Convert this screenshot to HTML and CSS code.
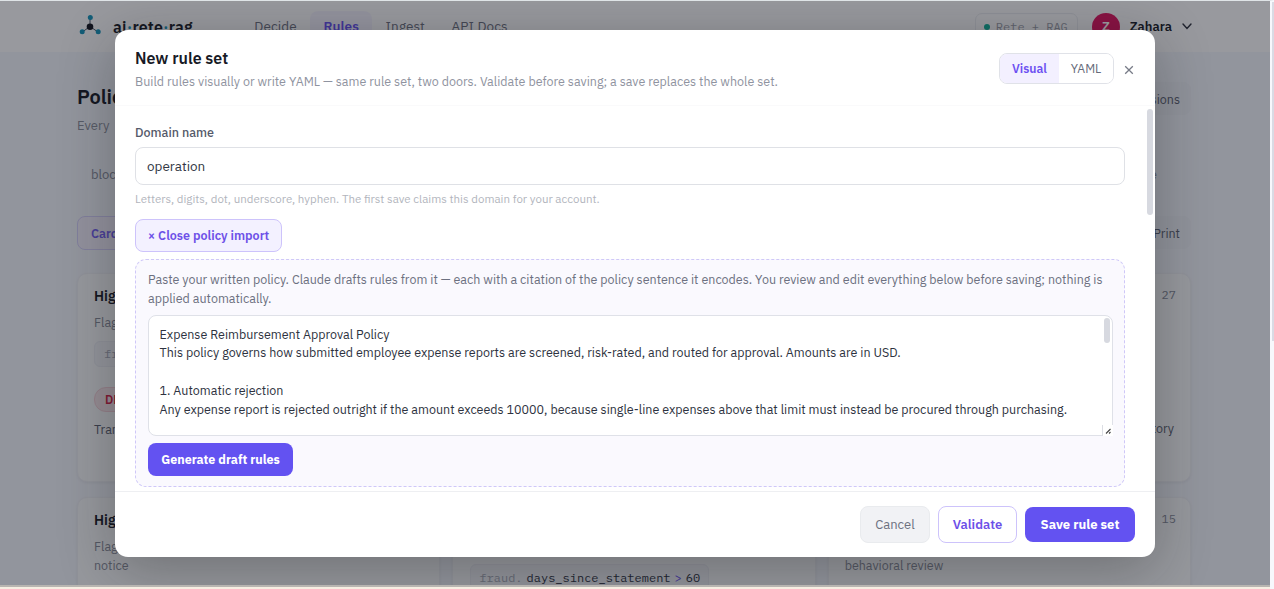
FILE: index.html
```html
<!DOCTYPE html>
<html lang="en">
<head>
    <meta charset="UTF-8">
    <meta name="viewport" content="width=device-width, initial-scale=1.0">
    <title>ai·rete·rag - Rules</title>
    <link rel="stylesheet" href="styles.css">
</head>
<body>
    <div class="app">
        <header class="topbar">
            <div class="brand">
                <svg class="logo" width="22" height="22" viewBox="0 0 22 22">
                    <path d="M11 12.5V4M11 12.5L3.3 18M11 12.5L19 18" stroke="#475569" stroke-width="1" fill="none"/>
                    <circle cx="11" cy="12.7" r="3.3" fill="#14161f"/>
                    <circle cx="11.3" cy="3.5" r="2.5" fill="#1593b8"/>
                    <circle cx="3.2" cy="17.8" r="2.5" fill="#1593b8"/>
                    <circle cx="19.2" cy="17.8" r="2.5" fill="#1593b8"/>
                </svg>
                <span class="brand-name">ai<i>·</i>rete<i>·</i>rag</span>
            </div>
            <nav class="nav">
                <a>Decide</a>
                <a class="active">Rules</a>
                <a>Ingest</a>
                <a>API Docs</a>
            </nav>
            <div class="account">
                <span class="mode"><span class="dot"></span>Rete + RAG</span>
                <span class="avatar">Z</span>
                <span class="user">Zahara</span>
                <svg width="10" height="7" viewBox="0 0 10 7"><path d="M1 1l4 4.5L9 1" fill="none" stroke="#2b2f3c" stroke-width="1.4" stroke-linecap="round"/></svg>
            </div>
        </header>

        <main class="page">
            <div class="page-head">
                <div>
                    <h1>Polici</h1>
                    <p class="lead">Every</p>
                </div>
                <button class="ghost">Versions</button>
            </div>
            <div class="notice-row"><span>block</span><span>e</span></div>
            <div class="toolbar">
                <button class="tab">Cards</button>
                <button class="ghost">Print</button>
            </div>
            <div class="cards">
                <article class="card">
                    <div class="card-title"><h3>High</h3></div>
                    <p>Flag</p>
                    <code class="cond"><span>fraud.</span></code>
                    <span class="deny">DENY</span>
                    <p class="reason">Trans</p>
                </article>
                <article class="card"></article>
                <article class="card">
                    <div class="card-title"><h3></h3><small>27</small></div>
                    <p class="reason tail">history</p>
                </article>
                <article class="card">
                    <div class="card-title"><h3>High</h3></div>
                    <p>Flag<br>notice</p>
                </article>
                <article class="card">
                    <code class="cond low"><span>fraud.</span>days_since_statement<b>&gt;</b>60</code>
                </article>
                <article class="card">
                    <div class="card-title"><h3></h3><small>15</small></div>
                    <p><br>behavioral review</p>
                </article>
            </div>
        </main>

        <div class="overlay">
            <div class="modal">
                <div class="modal-header">
                    <div>
                        <h2>New rule set</h2>
                        <p class="subtitle">Build rules visually or write YAML — same rule set, two doors. Validate before saving; a save replaces the whole set.</p>
                    </div>
                    <div class="header-actions">
                        <div class="switch">
                            <button class="on">Visual</button>
                            <button>YAML</button>
                        </div>
                        <svg width="10" height="10" viewBox="0 0 10 10"><path d="M1.2 1.2l7.6 7.6M8.8 1.2L1.2 8.8" stroke="#777b87" stroke-width="1.3"/></svg>
                    </div>
                </div>

                <div class="modal-body">
                    <label for="domain">Domain name</label>
                    <input id="domain" type="text" value="operation">
                    <p class="hint">Letters, digits, dot, underscore, hyphen. The first save claims this domain for your account.</p>
                    <button class="close-import">× Close policy import</button>
                    <div class="import">
                        <p class="import-text">Paste your written policy. Claude drafts rules from it — each with a citation of the policy sentence it encodes. You review and edit everything below before saving; nothing is<br>applied automatically.</p>
                        <div class="policy">
                            <textarea spellcheck="false">Expense Reimbursement Approval Policy
This policy governs how submitted employee expense reports are screened, risk-rated, and routed for approval. Amounts are in USD.

1. Automatic rejection
Any expense report is rejected outright if the amount exceeds 10000, because single-line expenses above that limit must instead be procured through purchasing.</textarea>
                            <span class="thumb"></span>
                            <svg class="grip" width="11" height="11" viewBox="0 0 11 11"><path d="M0 0h11v11H0z" fill="#fff"/><path d="M.5 0v11" stroke="#dcdee4"/><path d="M4 8.5L8.5 4M7 8.5l1.5-1.5" stroke="#444" stroke-width="1.1"/></svg>
                        </div>
                        <button class="primary small">Generate draft rules</button>
                    </div>
                    <span class="thumb body-thumb"></span>
                </div>

                <div class="modal-footer">
                    <button class="cancel">Cancel</button>
                    <button class="validate">Validate</button>
                    <button class="primary save">Save rule set</button>
                </div>
            </div>
        </div>
    </div>
    <span class="page-thumb"></span>
</body>
</html>
```

FILE: styles.css
```css
* {
    box-sizing: border-box;
}

body {
    margin: 0;
    height: 589px;
    overflow: hidden;
    background: #f7efe3;
    border-top: 1px solid #dfe4e7;
    border-right: 4px solid #f7f8fc;
    font-family: "IBM Plex Sans", Roboto, sans-serif;
    font-size: 13px;
    color: #171a26;
}

button, input, textarea {
    font-family: inherit;
    margin: 0;
}

h1, h2, h3, p {
    margin: 0;
}

.app {
    position: relative;
    height: 586px;
    overflow: hidden;
    background: #f0f3fa;
    border-bottom: 2px solid #b8b5b1;
}

/* top bar */
.topbar {
    display: flex;
    align-items: center;
    height: 51px;
    padding: 0 78px 0 79px;
    background: #fafafc;
}

.brand {
    display: flex;
    align-items: center;
    gap: 12px;
    width: 162px;
}

.logo {
    margin-top: -4px;
}

.brand-name {
    font-size: 16px;
    font-weight: 600;
    letter-spacing: 0.15px;
}

.brand-name i {
    color: #1593b8;
    font-style: normal;
}

.nav {
    display: flex;
    margin-top: -2px;
}

.nav a {
    padding: 6px 13.3px;
    border-radius: 8px;
    font-size: 13.5px;
    letter-spacing: 0.1px;
    color: #6a6f7e;
}

.nav .active {
    color: #644ff0;
    background: #f2f0fc;
    font-weight: 600;
}

.account {
    display: flex;
    align-items: center;
    margin-left: auto;
}

.mode {
    display: flex;
    align-items: center;
    gap: 6px;
    height: 28px;
    padding: 0 9px 0 8px;
    margin-right: 14px;
    border: 1px solid #e8eaef;
    border-radius: 7px;
    font-family: "IBM Plex Mono", "Liberation Mono", monospace;
    font-size: 12px;
    color: #9a9eaa;
}

.dot {
    width: 6px;
    height: 6px;
    border-radius: 50%;
    background: #10b09a;
}

.avatar {
    display: flex;
    align-items: center;
    justify-content: center;
    width: 28px;
    height: 28px;
    margin-right: 10px;
    border-radius: 50%;
    background: #df1460;
    color: #fff;
    font-weight: 600;
}

.user {
    margin-right: 10px;
    font-weight: 600;
}

/* rules page */
.page {
    padding: 30px 79px 0 77px;
}

.page-head, .toolbar, .notice-row {
    display: flex;
    justify-content: space-between;
}

.page-head {
    height: 70px;
}

h1 {
    font-size: 20px;
    font-weight: 600;
    line-height: 30px;
}

.lead {
    margin-top: 4px;
    line-height: 20px;
    color: #8b8f9c;
}

.ghost {
    height: 33px;
    padding: 0 10px;
    border: 1px solid #edf0f6;
    border-radius: 8px;
    background: #edf0f7;
    font-size: 12.5px;
    color: #5a5f70;
}

.notice-row {
    height: 64px;
    padding: 14px 34px 0 14px;
    color: #858a98;
}

.toolbar {
    height: 57px;
}

.tab {
    height: 34px;
    padding: 0 13px;
    border: 1px solid #d3cdf8;
    border-radius: 8px;
    background: #efedfa;
    font-size: 12.5px;
    font-weight: 600;
    color: #7360f0;
}

.cards {
    display: grid;
    grid-template-columns: repeat(3, 1fr);
    gap: 15px 12px;
}

.card {
    height: 209px;
    padding: 11px 14px 12px 16px;
    border: 1px solid #eceef3;
    border-radius: 10px;
    background: #f7f8fa;
    box-shadow: 0 1px 3px rgba(20, 24, 40, 0.06);
    font-size: 12.5px;
    line-height: 19px;
    color: #858a98;
}

.card-title {
    display: flex;
    justify-content: space-between;
    height: 28px;
}

.card h3 {
    font-size: 14px;
    font-weight: 600;
    line-height: 22px;
    color: #171a26;
}

.card small {
    font-size: 12px;
}

.cond {
    display: flex;
    gap: 5px;
    width: fit-content;
    height: 26px;
    margin-top: 9px;
    padding: 2px 9px;
    border: 1px solid #e8eaf1;
    border-radius: 6px;
    background: #eff1f6;
    font-family: "IBM Plex Mono", "Liberation Mono", monospace;
    font-size: 12px;
    color: #2c3142;
}

.cond span {
    color: #a5a9b6;
}

.cond b {
    font-weight: 400;
    color: #6650ee;
}

.low {
    gap: 4px;
    margin: 55px 0 0 1px;
    padding: 3px 8px;
}

.deny {
    display: inline-block;
    margin-top: 20px;
    padding: 2px 10px;
    border: 1px solid #f1cdd6;
    border-radius: 12px;
    background: #f5e4e8;
    font-size: 12px;
    font-weight: 600;
    color: #d02045;
}

.reason {
    margin-top: 8px;
    color: #5a5f70;
}

.tail {
    margin-top: 106px;
    text-align: right;
    padding-right: 2px;
}

/* modal */
.overlay {
    position: absolute;
    inset: 0;
    display: flex;
    justify-content: center;
    align-items: flex-start;
    padding-top: 29px;
    background: rgba(17, 20, 28, 0.42);
}

.modal {
    display: flex;
    flex-direction: column;
    width: 1040px;
    height: 527px;
    border-radius: 13px;
    background: #fff;
    box-shadow: 0 12px 56px rgba(20, 20, 20, 0.3);
}

.modal-header {
    display: flex;
    justify-content: space-between;
    height: 76px;
    padding: 17px 21px 0 20px;
    border-bottom: 1px solid #fafafb;
}

h2 {
    font-size: 16px;
    font-weight: 600;
    line-height: 22px;
}

.subtitle {
    margin-top: 2px;
    font-size: 12.5px;
    line-height: 20px;
    color: #8f93a0;
}

.header-actions {
    display: flex;
    align-items: center;
    gap: 10px;
    height: 31px;
    margin-top: 6px;
}

.header-actions > svg {
    margin-top: 2px;
}

.switch {
    display: flex;
    width: 115px;
    height: 31px;
    border: 1px solid #e0e2e8;
    border-radius: 8px;
    overflow: hidden;
}

.switch button {
    flex: 1;
    padding: 0 0 1px;
    border: 0;
    background: #fff;
    font-size: 12.25px;
    color: #666b7a;
}

.switch .on {
    flex: 0 0 59px;
    background: #f3f0ff;
    color: #6d50f2;
    font-weight: 600;
}

.modal-body {
    position: relative;
    height: 385px;
    padding: 16px 30px 0 20px;
}

.modal-body label {
    display: block;
    line-height: 20px;
    margin-bottom: 5px;
    font-size: 12.5px;
    font-weight: 500;
    color: #555a6a;
}

.modal-body input {
    display: block;
    width: 100%;
    height: 38px;
    padding: 0 11px;
    border: 1px solid #dfe1e6;
    border-radius: 8px;
    font-size: 13.5px;
    color: #333744;
}

.hint {
    margin-top: 5px;
    line-height: 18px;
    font-size: 11.5px;
    color: #b2b5bd;
}

.close-import {
    display: block;
    width: 147px;
    height: 33px;
    margin: 11px 0 7px;
    padding: 0 0 2px;
    border: 1px solid #cdc3fb;
    border-radius: 8px;
    background: #f3f1ff;
    font-size: 12.5px;
    font-weight: 600;
    color: #6d50e8;
}

.import {
    height: 228px;
    padding: 10px 12px;
    border: 1px dashed #cfc8f8;
    border-radius: 11px;
    background: #faf9fe;
}

.import-text {
    font-size: 12.5px;
    line-height: 18.75px;
    white-space: nowrap;
    color: #6c7080;
}

.policy {
    position: relative;
    height: 121px;
    margin: 7px 0 7px;
}

.policy textarea {
    display: block;
    width: 965px;
    height: 121px;
    padding: 9px 10.5px;
    border: 1px solid #dfe1e8;
    border-radius: 8px;
    overflow: hidden;
    resize: none;
    font-size: 12.5px;
    line-height: 18.75px;
    color: #2d3240;
}

.thumb {
    position: absolute;
    top: 3px;
    right: 2px;
    width: 6px;
    height: 25px;
    border-radius: 3px;
    background: #d7d9e0;
}

.body-thumb {
    height: 106px;
}

.grip {
    position: absolute;
    right: -1px;
    bottom: 0;
}

.primary {
    display: block;
    padding: 0 0 1px;
    border: 0;
    border-radius: 8px;
    background: #6352f1;
    color: #fff;
    font-size: 12.5px;
    font-weight: 700;
}

.small {
    width: 145px;
    height: 33px;
}

.modal-footer {
    display: flex;
    justify-content: flex-end;
    align-items: center;
    gap: 8px;
    height: 66px;
    padding: 0 20px;
    border-top: 1px solid #eeeff2;
}

.modal-footer button {
    height: 37px;
    padding: 0 0 1px;
    border-radius: 8px;
    font-size: 13px;
}

.modal-footer .cancel {
    width: 70px;
    border: 1px solid #e9ebee;
    background: #f1f2f5;
    color: #6c7080;
}

.modal-footer .validate {
    width: 79px;
    border: 1px solid #cdc3fb;
    background: #fff;
    font-weight: 600;
    color: #6d50e8;
}

.modal-footer .save {
    width: 110px;
    height: 35px;
}

/* thin scrollbar at the window edge */
.page-thumb {
    position: absolute;
    top: 2px;
    right: 0;
    width: 2px;
    height: 339px;
    background: #d9dbe4;
}
```
